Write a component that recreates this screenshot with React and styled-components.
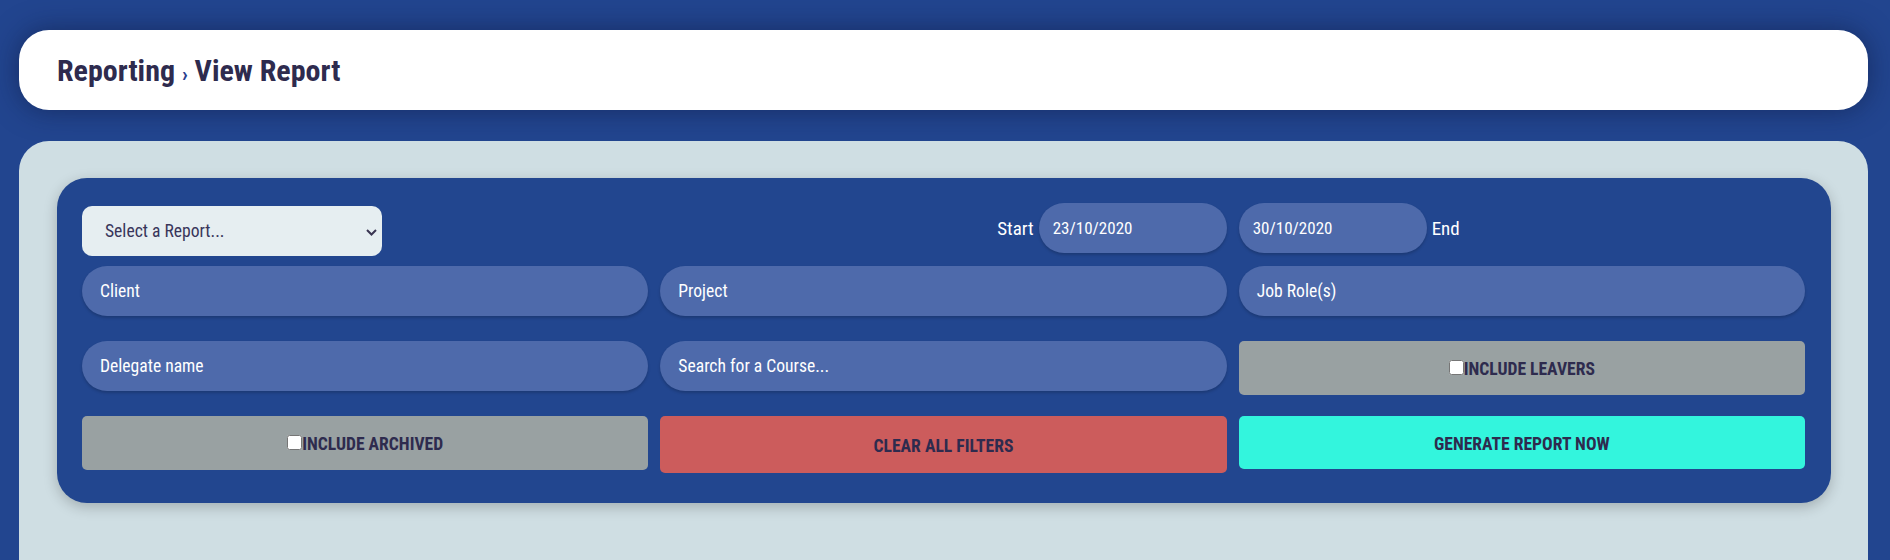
import React from "react";
import styled, { createGlobalStyle } from "styled-components";

const Global = createGlobalStyle`
  html, body { margin: 0; padding: 0; }
  body {
    background: #22458f;
    font-family: "Roboto Condensed", Roboto, "Liberation Sans", sans-serif;
    font-stretch: condensed;
    overflow: hidden;
  }
`;

const Page = styled.div`
  padding: 30px 22px 0 19px;
  height: 560px;
  box-sizing: border-box;
  display: flex;
  flex-direction: column;
  gap: 31px;
`;

const Header = styled.header`
  height: 80px;
  background: #fff;
  border-radius: 30px;
  box-shadow: 0 0 28px rgba(12, 24, 60, 0.55);
  display: flex;
  align-items: center;
  padding-left: 38px;
`;

const Title = styled.h1`
  margin: 0;
  font-size: 30px;
  font-weight: 700;
  color: #2e2b4e;
  letter-spacing: 0;
`;

const Sep = styled.span`
  font-size: 21px;
  color: #2b3f8f;
`;

const Panel = styled.main`
  flex: 1;
  background: #cfdee3;
  border-radius: 30px 30px 0 0;
  padding: 37px 37px 0 38px;
`;

const Card = styled.section`
  background: #22468f;
  border-radius: 30px;
  box-shadow: 0 4px 14px rgba(0, 0, 0, 0.22);
  padding: 25px 26px 30px 25px;
`;

const Grid = styled.div`
  display: grid;
  grid-template-columns: 1fr 1fr 1fr;
  column-gap: 12px;
  row-gap: 25px;
  grid-template-rows: ${(p) => p.$rows || "auto"};
  align-items: start;
  margin-bottom: ${(p) => p.$mb || 0}px;
`;

const Cell = styled.div`
  display: flex;
  align-items: center;
  justify-content: ${(p) => p.$justify || "flex-start"};
  height: 50px;
`;

const SelectBox = styled.div`
  position: relative;
  width: 300px;
  height: 50px;
  margin-top: 3px;
  align-self: flex-start;
  background: #e6eef1;
  border-radius: 10px;
  display: flex;
  align-items: center;
  padding-left: 23px;
  box-sizing: border-box;
  font-size: 17.6px;
  color: #38355a;
`;

const Chevron = styled.svg`
  position: absolute;
  right: 5px;
  top: 23px;
`;

const Label = styled.span`
  color: #fff;
  font-size: 19px;
  margin: ${(p) => p.$m};
`;

const Input = styled.div`
  box-sizing: border-box;
  height: 50px;
  width: ${(p) => p.$w || "100%"};
  background: #4e6aab;
  border-radius: 25px;
  box-shadow: 0 2px 3px rgba(0, 0, 0, 0.18);
  color: #fff;
  font-size: ${(p) => p.$fs || 17.6}px;
  display: flex;
  align-items: center;
  padding-left: ${(p) => p.$pl || 18}px;
`;

const Button = styled.div`
  box-sizing: border-box;
  height: ${(p) => p.$h}px;
  background: ${(p) => p.$bg};
  border-radius: 5px;
  display: flex;
  align-items: center;
  justify-content: center;
  padding-top: 2px;
  color: #2e2b4e;
  font-weight: 700;
  font-size: 17.6px;
  text-transform: uppercase;
`;

const Check = styled.input`
  flex-shrink: 0;
  margin: 0 0 3px 0;
  width: 15px;
  height: 15px;
`;

export default function App() {
  return (
    <>
      <Global />
      <Page>
        <Header>
          <Title>
            Reporting <Sep>›</Sep> View Report
          </Title>
        </Header>
        <Panel>
          <Card>
            <Grid $mb={13}>
              <Cell>
                <SelectBox>
                  Select a Report...
                  <Chevron width="11" height="7" viewBox="0 0 11 7">
                    <path d="M1 1l4.5 4.5L10 1" fill="none" stroke="#3a3552" strokeWidth="2" />
                  </Chevron>
                </SelectBox>
              </Cell>
              <Cell $justify="flex-end">
                <Label $m="0 5px 0 0">Start</Label>
                <Input $w="188px" $pl={14} $fs={17}>23/10/2020</Input>
              </Cell>
              <Cell>
                <Input $w="188px" $pl={14} $fs={17}>30/10/2020</Input>
                <Label $m="0 0 0 5px">End</Label>
              </Cell>
            </Grid>
            <Grid $rows="50px 50px 57px">
              <Input>Client</Input>
              <Input>Project</Input>
              <Input>Job Role(s)</Input>
              <Input>Delegate name</Input>
              <Input>Search for a Course...</Input>
              <Button $bg="#99a1a2" $h={54}>
                <Check type="checkbox" />
                Include Leavers
              </Button>
              <Button $bg="#99a1a2" $h={54}>
                <Check type="checkbox" />
                Include Archived
              </Button>
              <Button $bg="#cc5c5c" $h={57}>Clear All Filters</Button>
              <Button $bg="#33f5dd" $h={53}>Generate Report Now</Button>
            </Grid>
          </Card>
        </Panel>
      </Page>
    </>
  );
}
